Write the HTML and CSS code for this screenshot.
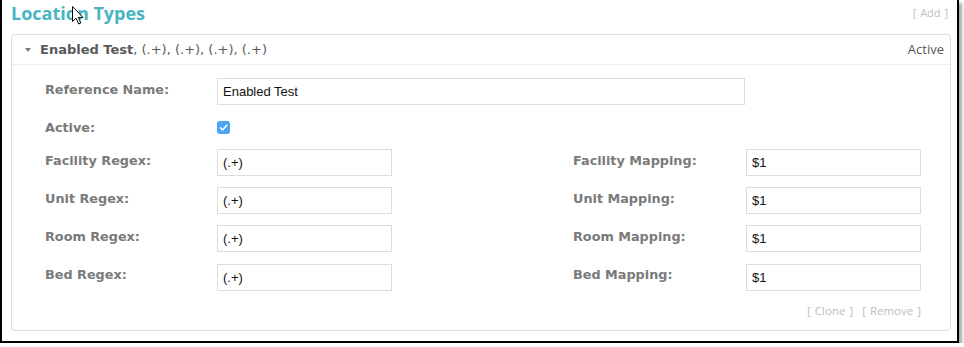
FILE: index.html
```html
<!DOCTYPE html>
<html lang="en">
<head>
    <meta charset="UTF-8">
    <meta name="viewport" content="width=device-width, initial-scale=1.0">
    <title>Location Types</title>
    <link rel="stylesheet" href="styles.css">
</head>
<body>
    <div class="frame">
        <div class="title-row">
            <h1 class="title">Location Types</h1>
            <a class="link add">[ Add ]</a>
        </div>
        <div class="panel">
            <div class="panel-head">
                <span class="caret"></span>
                <span class="summary"><b>Enabled Test</b>, (.+), (.+), (.+), (.+)</span>
                <span class="status">Active</span>
            </div>
            <div class="panel-body">
                <div class="form">
                    <label>Reference Name:</label>
                    <input class="wide" type="text" value="Enabled Test">

                    <label>Active:</label>
                    <span class="check">
                        <svg width="13" height="13" viewBox="0 0 13 13"><rect width="13" height="13" rx="3" fill="#4aa6f2"/><path d="M3.4 6.8 L5.6 9 L9.8 4.3" fill="none" stroke="#fff" stroke-width="1.6" stroke-linecap="round" stroke-linejoin="round"/></svg>
                    </span>

                    <label>Facility Regex:</label>
                    <input type="text" value="(.+)">
                    <label>Facility Mapping:</label>
                    <input type="text" value="$1">

                    <label>Unit Regex:</label>
                    <input type="text" value="(.+)">
                    <label>Unit Mapping:</label>
                    <input type="text" value="$1">

                    <label>Room Regex:</label>
                    <input type="text" value="(.+)">
                    <label>Room Mapping:</label>
                    <input type="text" value="$1">

                    <label>Bed Regex:</label>
                    <input class="last" type="text" value="(.+)">
                    <label>Bed Mapping:</label>
                    <input class="last" type="text" value="$1">
                </div>
                <div class="actions">
                    <a class="link">[ Clone ]</a>
                    <a class="link">[ Remove ]</a>
                </div>
            </div>
        </div>
        <svg class="cursor" width="12" height="19" viewBox="0 0 12 19"><path d="M0.5 0.5 L0.5 15.5 L4 12.2 L6.6 18 L8.8 17 L6.3 11.4 L11 11.4 Z" fill="#fff" stroke="#000" stroke-width="1" stroke-linejoin="round"/></svg>
    </div>
</body>
</html>
```

FILE: styles.css
```css
body, html {
    margin: 0;
    padding: 0;
    background-color: #ffffff;
}
.frame {
    position: relative;
    box-sizing: border-box;
    width: 959px;
    height: 343px;
    border-left: 2px solid #000;
    border-right: 2px solid #000;
    border-bottom: 2px solid #000;
    box-shadow: 3px 3px 3px rgba(0, 0, 0, 0.35);
    background: #fff;
}
.title-row {
    display: flex;
    justify-content: space-between;
    align-items: flex-start;
    height: 34px;
    padding: 0 9px;
}
.title {
    margin: 0;
    font-family: 'Open Sans', sans-serif;
    font-weight: 700;
    font-size: 18px;
    line-height: 26px;
    color: #47b5c2;
}
.link {
    font-family: 'Open Sans', sans-serif;
    font-size: 11.5px;
    color: #bdbdbd;
    line-height: 16px;
    word-spacing: 1px;
}
.add {
    font-size: 11px;
    line-height: 26px;
}
.panel {
    margin: 0 6px 0 9px;
    border: 1px solid #dcdcdc;
    border-radius: 4px;
}
.panel-head {
    display: flex;
    align-items: center;
    height: 29px;
    padding: 0 6px 0 13px;
    border-bottom: 1px solid #efefef;
    font-family: 'DejaVu Sans', Verdana, sans-serif;
    font-size: 13px;
    line-height: 29px;
    color: #5a5a5a;
}
.caret {
    width: 0;
    height: 0;
    border-left: 3.5px solid transparent;
    border-right: 3.5px solid transparent;
    border-top: 4px solid #7a7a7a;
    margin-right: 9px;
}
.summary {
    flex: 1;
}
.status {
    font-family: 'Open Sans', sans-serif;
    font-size: 13px;
    color: #555;
}
.panel-body {
    padding: 13px 29px 11px 33px;
}
.form {
    display: grid;
    grid-template-columns: 172px 356px 173px 175px;
    grid-template-rows: 27px 22px 27px 27px 27px 27px;
    row-gap: 11px;
}
.form label {
    font-family: 'DejaVu Sans', Verdana, sans-serif;
    font-weight: bold;
    font-size: 12.8px;
    line-height: 23px;
    color: #7a7a7a;
}
.form input {
    box-sizing: border-box;
    width: 175px;
    height: 27px;
    margin: 0;
    padding: 0 5px;
    border: 1px solid #dcdcdc;
    border-radius: 0;
    font-family: 'Liberation Sans', Arial, sans-serif;
    font-size: 13px;
    color: #111;
    background: #fff;
    outline: none;
}
.form input.last {
    margin-top: 1px;
}
.form input.wide {
    width: 528px;
    grid-column: 2 / 5;
}
.check {
    display: flex;
    align-items: center;
    grid-column: 2 / 5;
}
.actions {
    display: flex;
    justify-content: flex-end;
    gap: 9px;
    padding-top: 13px;
}
.cursor {
    position: absolute;
    left: 70px;
    top: 6px;
}
```
